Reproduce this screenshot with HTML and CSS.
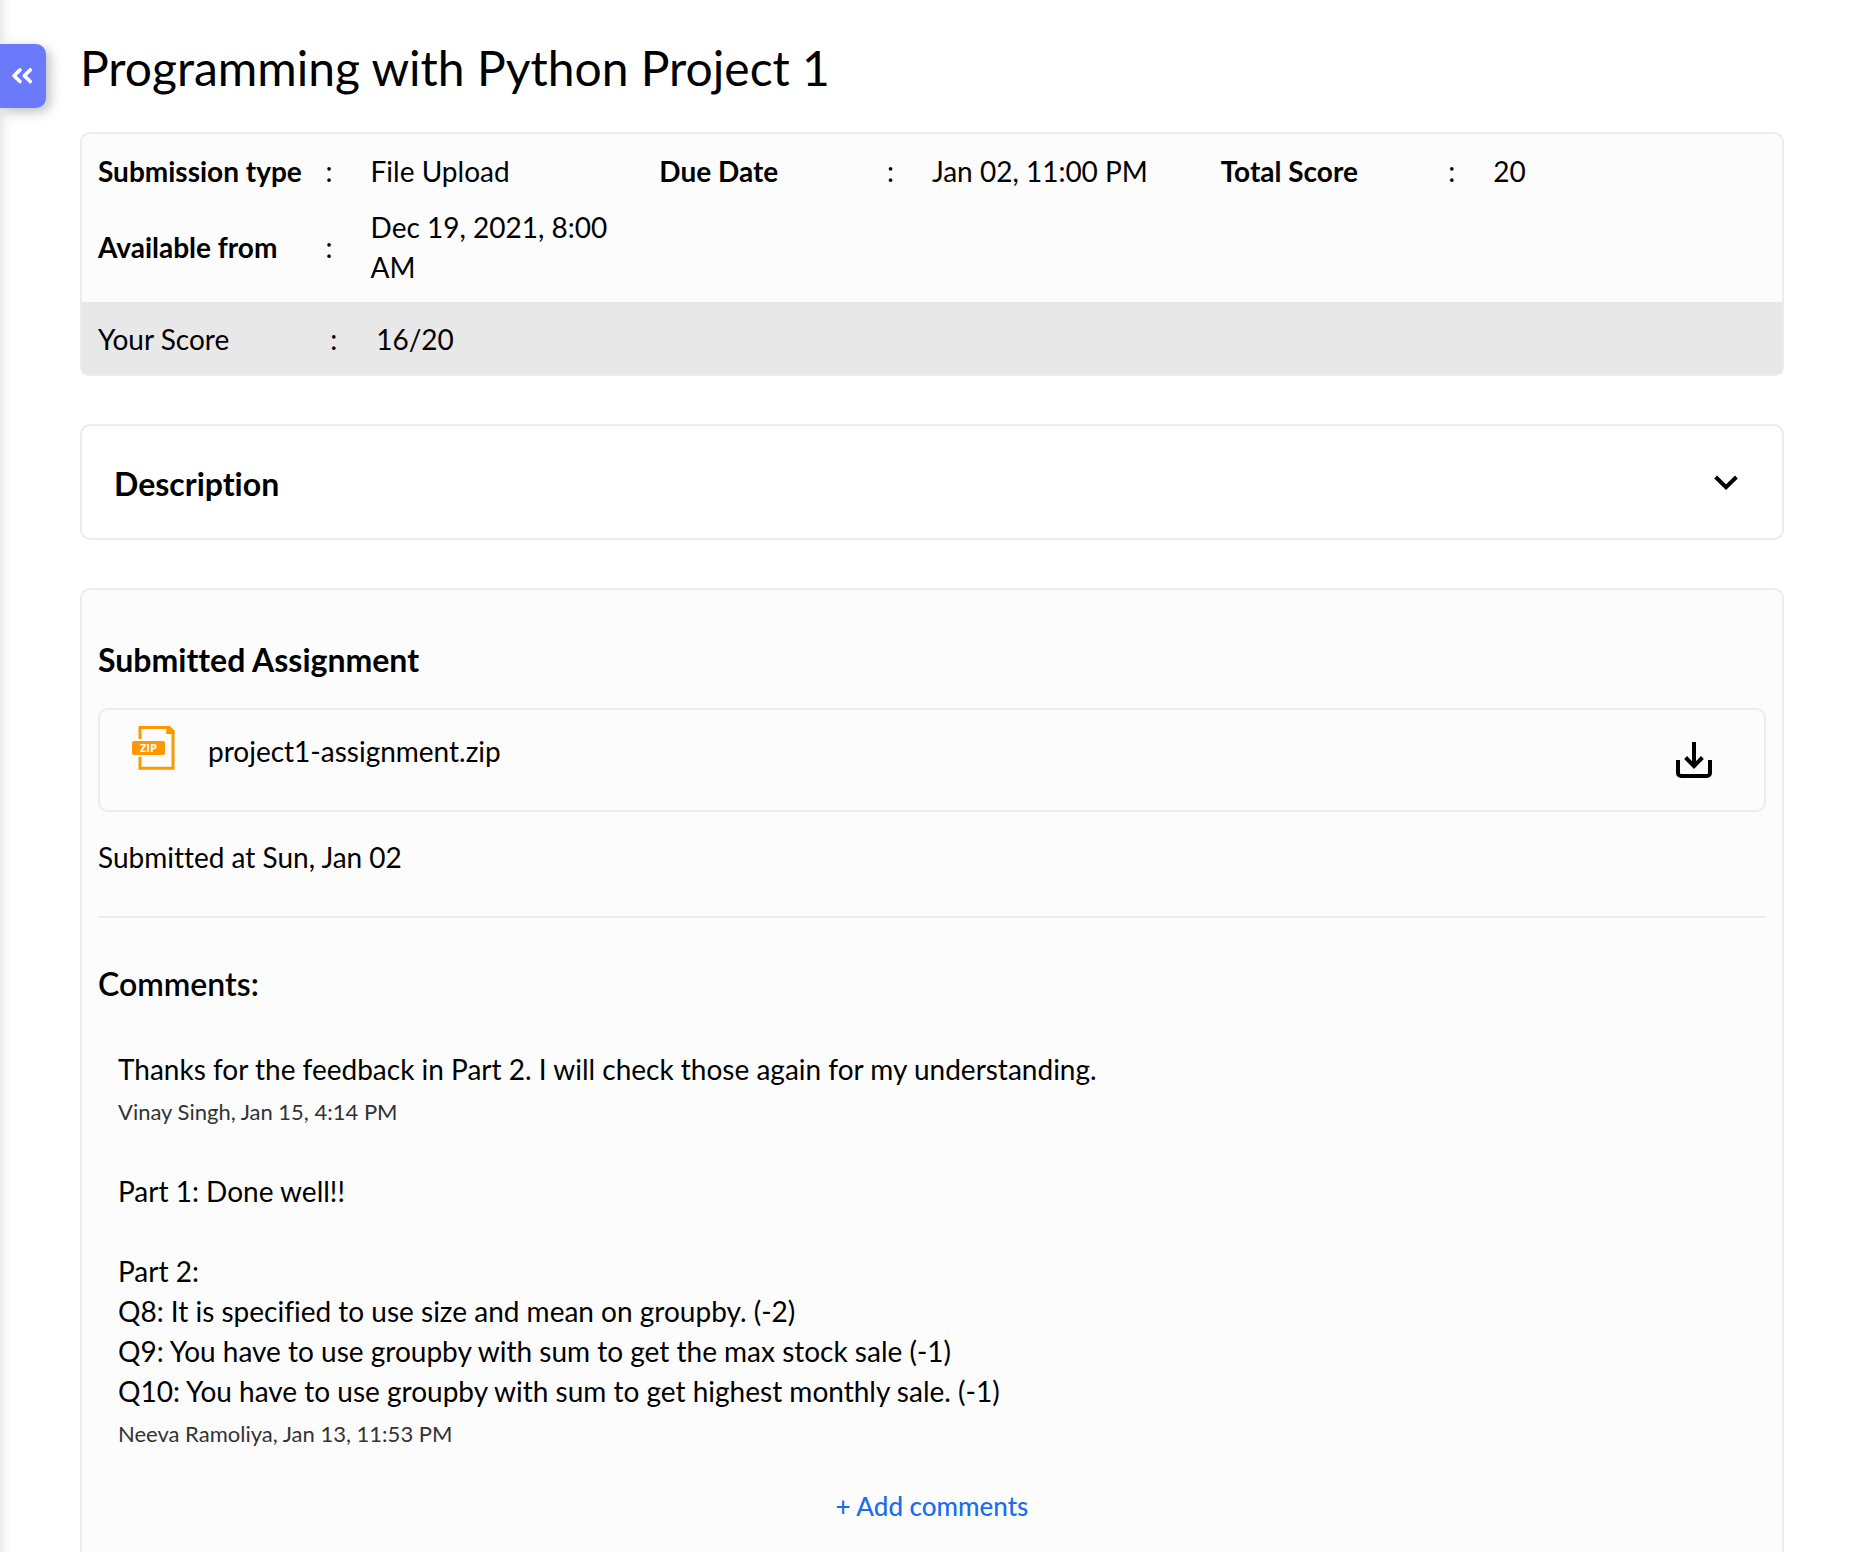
FILE: index.html
```html
<!DOCTYPE html>
<html lang="en">
<head>
<meta charset="utf-8">
<title>Programming with Python Project 1</title>
<link rel="stylesheet" href="styles.css">
</head>
<body>
<button class="drawer-toggle" aria-label="Collapse">
  <svg width="22" height="18" viewBox="0 0 22 18" fill="none" stroke="#fff" stroke-width="3.6" stroke-linecap="round" stroke-linejoin="round"><path d="M9 2.900 3 8.700l6 5.800M19.300 2.900l-6 5.800 6 5.800"/></svg>
</button>
<main class="page">
  <h1 class="title">Programming with Python Project 1</h1>

  <section class="card summary">
    <div class="facts">
      <div class="fact"><b class="label">Submission type</b><span class="colon">:</span><span class="value">File Upload</span></div>
      <div class="fact"><b class="label">Due Date</b><span class="colon">:</span><span class="value">Jan 02, 11:00 PM</span></div>
      <div class="fact"><b class="label">Total Score</b><span class="colon">:</span><span class="value">20</span></div>
      <div class="fact"><b class="label">Available from</b><span class="colon">:</span><span class="value">Dec 19, 2021, 8:00 AM</span></div>
    </div>
    <div class="score"><span class="score-label">Your Score</span><span class="score-colon">:</span><span>16/20</span></div>
  </section>

  <section class="card description">
    <h2 class="heading">Description</h2>
    <svg class="chevron" width="24" height="16" viewBox="0 0 24 16" fill="none" stroke="#000" stroke-width="4"><path d="M1.600 2 12 12.200 22.400 2"/></svg>
  </section>

  <section class="card submission">
    <h2 class="heading">Submitted Assignment</h2>
    <div class="file">
      <svg class="zip" width="44" height="46" viewBox="0 0 44 46">
        <path d="M8 14V2.500H37L41 6.800V43.200H8V31.700" fill="none" stroke="#ff9800" stroke-width="3"/>
        <path d="M34.300 1h3.400L42.500 5.500V9h-8.200z" fill="#ff9800"/>
        <rect x="0" y="16" width="33" height="14" rx="2" fill="#ff9800"/>
        <text x="16.500" y="27" text-anchor="middle" class="zip-text">ZIP</text>
      </svg>
      <span class="file-name">project1-assignment.zip</span>
      <svg class="download" width="36" height="36" viewBox="0 0 36 36" fill="none" stroke="#000" stroke-width="4"><path d="M2 18v13a3 3 0 0 0 3 3h26a3 3 0 0 0 3-3V18"/><path d="M18 0v24M9.600 15.500 18 24.200 26.400 15.500"/></svg>
    </div>
    <p class="submitted-at">Submitted at Sun, Jan 02</p>
    <hr class="rule">
    <h2 class="heading comments-heading">Comments:</h2>
    <article class="comment">
      <p class="comment-text">Thanks for the feedback in Part 2. I will check those again for my understanding.</p>
      <p class="byline">Vinay Singh, Jan 15, 4:14 PM</p>
    </article>
    <article class="comment">
      <p class="comment-text">Part 1: Done well!!

Part 2:
Q8: It is specified to use size and mean on groupby. (-2)
Q9: You have to use groupby with sum to get the max stock sale (-1)
Q10: You have to use groupby with sum to get highest monthly sale. (-1)</p>
      <p class="byline">Neeva Ramoliya, Jan 13, 11:53 PM</p>
    </article>
    <button class="add">+ Add comments</button>
  </section>
</main>
</body>
</html>
```
FILE: styles.css
```css
* { box-sizing: border-box; }
body {
  margin: 0;
  min-height: 100vh;
  background: #fff;
  color: #000;
  font: 400 28px/40px Lato, sans-serif;
  font-variant-ligatures: none;
  box-shadow: inset 14px 0 14px -14px rgba(0, 0, 0, 0.16);
}
h1, h2, p { margin: 0; }
button { border: 0; font: inherit; font-variant-ligatures: none; }

.drawer-toggle {
  position: absolute;
  left: 0;
  top: 44px;
  width: 46px;
  height: 64px;
  padding: 0 0 0 11px;
  display: flex;
  align-items: center;
  background: #6b7afa;
  border-radius: 0 10px 10px 0;
  box-shadow: 4px 4px 12px rgba(0, 0, 0, 0.25);
}

.page { padding: 32px 80px 0; }
.title { font-size: 48px; line-height: 72px; font-weight: 400; }

.card {
  border: 2px solid #ebebf0;
  border-radius: 10px;
  background: #fcfcfc;
}

.summary { margin-top: 28px; height: 244px; }
.facts {
  height: 168px;
  padding: 17px 0 0 16px;
  display: grid;
  grid-template-columns: repeat(3, 1fr);
  align-content: start;
  row-gap: 16px;
}
.fact {
  display: grid;
  grid-template-columns: 227.6px 45px 1fr;
  align-items: center;
  padding-right: 16px;
}
.label { font-weight: 700; white-space: nowrap; }
.score {
  height: 72px;
  padding: 2px 16px 0;
  display: grid;
  grid-template-columns: 232.2px 46px 1fr;
  align-items: center;
  background: #e8e8e8;
}

.description {
  margin-top: 48px;
  height: 116px;
  padding: 0 44px 0 32px;
  display: flex;
  align-items: center;
  justify-content: space-between;
  background: #fff;
}
.heading { font-size: 32px; line-height: 48px; font-weight: 700; }
.description .heading { margin-top: 4px; }
.chevron { margin-top: 2px; }

.submission {
  margin-top: 48px;
  height: 964px;
  padding: 46px 16px 0;
  border-bottom: 0;
  border-radius: 10px 10px 0 0;
}
.file {
  margin-top: 24px;
  height: 104px;
  padding: 14px 52px 0 32px;
  display: flex;
  border: 2px solid #ebebf0;
  border-radius: 10px;
}
.zip { margin-top: 1px; }
.zip-text { font: 700 11.2px "Open Sans", sans-serif; fill: #fff; }
.file-name { margin: 7px auto 0 32px; }
.download { margin-top: 18px; }
.submitted-at { margin-top: 25px; }
.rule { margin: 39px 0 0; border: 0; height: 2px; background: #ebebf0; }
.comments-heading { margin-top: 42px; font-weight: 600; }
.comment { padding-left: 20px; margin-top: 39px; }
.comments-heading + .comment { margin-top: 41px; }
.comment-text { white-space: pre-line; }
.byline { margin-top: 3px; font-size: 22px; line-height: 40px; color: #333; }
.add {
  display: block;
  margin: 32px auto 0;
  padding: 0;
  background: none;
  color: #1a6eeb;
  font-size: 26px;
  font-weight: 500;
}
```
